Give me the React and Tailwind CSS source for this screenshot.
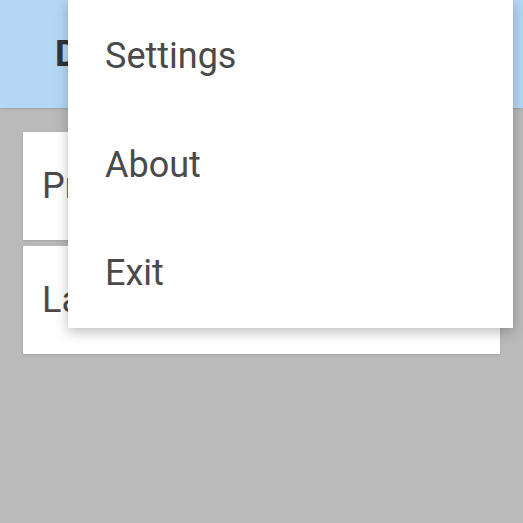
const items = ["Settings", "About", "Exit"];

export default function App() {
  return (
    <div
      className="relative w-[523px] h-[523px] overflow-hidden bg-[#bababa] text-[#4a4a4a]"
      style={{ fontFamily: "Roboto, 'Liberation Sans', sans-serif" }}
    >
      {/* Header */}
      <div className="h-[108px] bg-[#b4d7f5] flex items-center pl-[55px] shadow-sm">
        <h1 className="text-[36px] font-bold text-[#333]">Dashboard</h1>
      </div>

      {/* List */}
      <div className="flex flex-col gap-[6px] pt-[24px] pl-[23px] w-[500px]">
        <div className="h-[108px] bg-white flex items-center pl-[19px] text-[36px] shadow-sm">
          Profile
        </div>
        <div className="h-[108px] bg-white flex items-center pl-[19px] text-[36px] shadow-sm">
          Language
        </div>
      </div>

      {/* Overflow menu */}
      <div className="absolute left-[68px] top-0 w-[445px] bg-white shadow-[0_4px_12px_rgba(0,0,0,0.25)] flex flex-col pt-[2px]">
        {items.map((item) => (
          <div key={item} className="h-[108.5px] flex items-center pl-[37px] text-[36px] text-[#4a4a4a]">
            {item}
          </div>
        ))}
      </div>
    </div>
  );
}
